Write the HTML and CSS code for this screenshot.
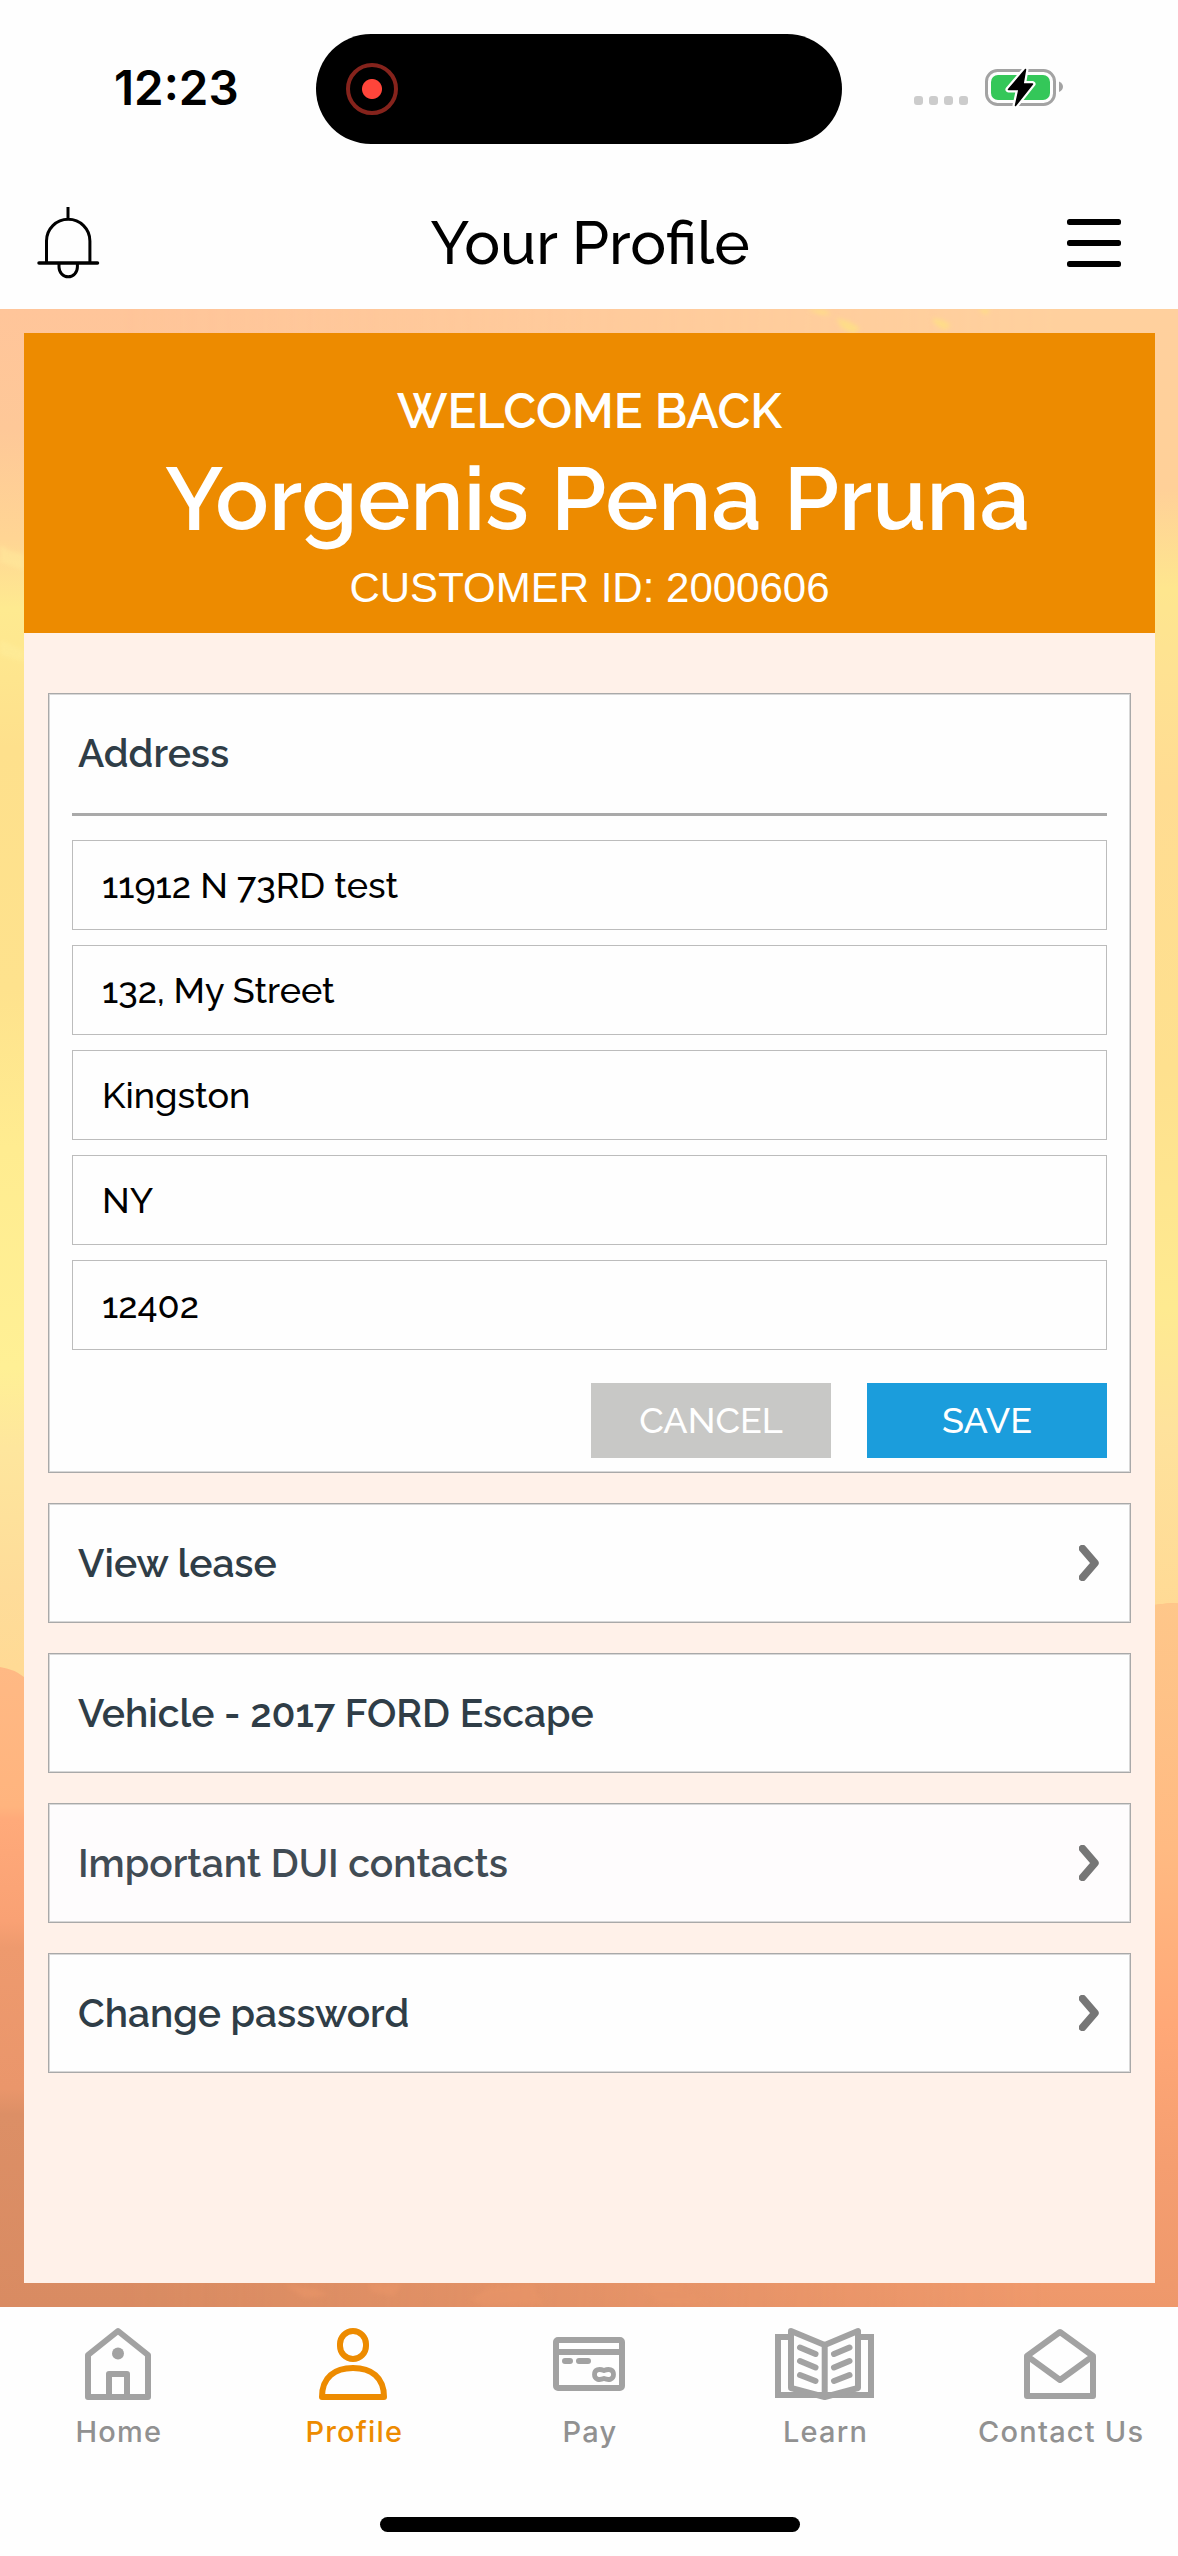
FILE: index.html
```html
<!DOCTYPE html>
<html lang="en">
<head>
<meta charset="utf-8">
<title>Your Profile</title>
<link rel="stylesheet" href="styles.css">
</head>
<body>
<div class="screen">
  <header class="status">
    <div class="clock">12:23</div>
    <div class="island"><span class="rec"></span></div>
    <div class="signal"><i></i><i></i><i></i><i></i></div>
    <svg class="battery" width="80" height="42" viewBox="984 66 80 42">
      <rect x="986.5" y="70.500" width="68" height="34" rx="11" fill="none" stroke="#a3a3a3" stroke-width="3"/>
      <path d="M1059 81.500q4 2 4 5.300t-4 5.300z" fill="#a3a3a3"/>
      <rect x="991" y="75" width="59" height="25" rx="7" fill="#34c759"/>
      <path d="M1025.500 69.500 1008.500 89.500H1019L1015.500 105.500 1032.500 84H1023Z" fill="#000" stroke="#fff" stroke-width="6" stroke-linejoin="round" paint-order="stroke"/>
      <path d="M1025.500 69.500 1008.500 89.500H1019L1015.500 105.500 1032.500 84H1023Z" fill="#000" stroke="#000" stroke-width="1.500" stroke-linejoin="round"/>
    </svg>
  </header>
  <nav class="topbar">
    <svg class="bell" width="66" height="74" viewBox="35 206 66 74" fill="none" stroke="#000" stroke-width="3">
      <path d="M68 207v12M46.500 263V241a21.700 21.700 0 0 1 43.400 0v22M59 264v3a9.200 9.800 0 0 0 18.400 0v-3"/>
      <path d="M39 263H97.500" stroke-linecap="round" stroke-width="3.500"/>
    </svg>
    <h1>Your Profile</h1>
    <div class="burger"><i></i><i></i><i></i></div>
  </nav>
  <main class="scene">
    <svg class="sky" width="1178" height="1998" viewBox="0 309 1178 1998" preserveAspectRatio="none">
      <defs>
        <linearGradient id="west" gradientUnits="userSpaceOnUse" x1="0" y1="309" x2="0" y2="2307">
          <stop offset="0" stop-color="#ffc59a"/><stop offset=".06" stop-color="#fec898"/><stop offset=".115" stop-color="#ffd594"/>
          <stop offset=".15" stop-color="#feea90"/><stop offset=".22" stop-color="#fee08c"/><stop offset=".34" stop-color="#fee28d"/>
          <stop offset=".42" stop-color="#ffec90"/><stop offset=".53" stop-color="#fff095"/><stop offset=".57" stop-color="#fee69d"/>
          <stop offset=".64" stop-color="#fedc99"/><stop offset=".68" stop-color="#ffda95"/>
        </linearGradient>
        <linearGradient id="east" gradientUnits="userSpaceOnUse" x1="0" y1="309" x2="0" y2="2307">
          <stop offset="0" stop-color="#ffd09e"/><stop offset=".09" stop-color="#ffd098"/><stop offset=".14" stop-color="#fee68e"/>
          <stop offset=".18" stop-color="#fee292"/><stop offset=".24" stop-color="#ffdc92"/><stop offset=".38" stop-color="#fee08e"/>
          <stop offset=".5" stop-color="#feea90"/><stop offset=".56" stop-color="#fee29c"/><stop offset=".65" stop-color="#ffda95"/>
        </linearGradient>
        <linearGradient id="hillWest" gradientUnits="userSpaceOnUse" x1="0" y1="1665" x2="0" y2="2307">
          <stop offset="0" stop-color="#ffb984"/><stop offset=".22" stop-color="#ffb47e"/><stop offset=".24" stop-color="#ffaa7a"/>
          <stop offset=".4" stop-color="#f9a174"/><stop offset=".44" stop-color="#ee9a6e"/><stop offset=".66" stop-color="#ea966b"/>
          <stop offset=".7" stop-color="#dc8f66"/><stop offset="1" stop-color="#d98b62"/>
        </linearGradient>
        <linearGradient id="hillEast" gradientUnits="userSpaceOnUse" x1="0" y1="1600" x2="0" y2="2307">
          <stop offset="0" stop-color="#fec78a"/><stop offset=".35" stop-color="#ffba82"/><stop offset=".6" stop-color="#ffa877"/>
          <stop offset=".8" stop-color="#f59e70"/><stop offset="1" stop-color="#ee986b"/>
        </linearGradient>
        <linearGradient id="fade" x1="0" x2="1" y1="0" y2="0">
          <stop offset=".1" stop-color="#000"/><stop offset=".9" stop-color="#fff"/>
        </linearGradient>
        <mask id="toEast" maskUnits="userSpaceOnUse" x="0" y="309" width="1178" height="1998">
          <rect x="0" y="309" width="1178" height="1998" fill="url(#fade)"/>
        </mask>
        <filter id="soft"><feGaussianBlur stdDeviation="2"/></filter>
      </defs>
      <rect y="309" width="1178" height="1998" fill="url(#west)"/>
      <rect y="309" width="1178" height="1998" fill="url(#east)" mask="url(#toEast)"/>
      <path d="M808 309l16 1 8 5-14-1zM836 318l14 4 10 6-6 6-12-6zM932 318l10 2 9 5-6 5-10-6zM978 309h12l-4 6z" fill="#fedd88" filter="url(#soft)"/>
      <path d="M0 1667q14 2 24 10L600 1700 1154 1605q14-2 24-2V2307H0z" fill="url(#hillWest)"/>
      <path d="M0 1667q14 2 24 10L600 1700 1154 1605q14-2 24-2V2307H0z" fill="url(#hillEast)" mask="url(#toEast)"/>
      <path d="M0 545l10 6 14 3v16l-24-8z M0 640l24 10v12L0 655z" fill="#fff0a0" opacity=".4" filter="url(#soft)"/>
      <path d="M285 2285l30 4 15 6-25 3zM368 2284h34l-8 12-22-4zM470 2300l18-12 44-4 12 20-60 2zM640 2287h40l30 16h-50z" fill="#e89468" opacity=".7" filter="url(#soft)"/>
    </svg>
    <section class="panel">
      <div class="welcome">
        <p class="hello">WELCOME BACK</p>
        <p class="name">Yorgenis Pena Pruna</p>
        <p class="cid">CUSTOMER ID: 2000606</p>
      </div>
      <div class="cards">
        <div class="card address">
          <h2>Address</h2>
          <div class="field">11912 N 73RD test</div>
          <div class="field">132, My Street</div>
          <div class="field">Kingston</div>
          <div class="field">NY</div>
          <div class="field">12402</div>
          <div class="actions">
            <button class="btn cancel">CANCEL</button>
            <button class="btn save">SAVE</button>
          </div>
        </div>
        <div class="card row"><span>View lease</span><svg class="chev" width="20" height="36" viewBox="0 0 20 36"><path d="M3.500 3.500 16 18 3.500 32.500"/></svg></div>
        <div class="card row"><span>Vehicle - 2017 FORD Escape</span></div>
        <div class="card row pressed"><span>Important DUI contacts</span><svg class="chev" width="20" height="36" viewBox="0 0 20 36"><path d="M3.500 3.500 16 18 3.500 32.500"/></svg></div>
        <div class="card row"><span>Change password</span><svg class="chev" width="20" height="36" viewBox="0 0 20 36"><path d="M3.500 3.500 16 18 3.500 32.500"/></svg></div>
      </div>
    </section>
  </main>
  <footer class="tabs">
    <a class="tab"><svg width="66" height="74" viewBox="85 2327 66 74"><path d="M88 2355 118 2331 148 2355V2397H88Z M109 2397V2374H127V2397"/><circle cx="118" cy="2353.500" r="6" fill="currentColor" stroke="none"/></svg><span>Home</span></a>
    <a class="tab on"><svg width="70" height="74" viewBox="318 2327 70 74"><rect x="340" y="2331" width="26" height="28" rx="13"/><path d="M322 2397c0-20 13-29 31-29s31 9 31 29z"/></svg><span>Profile</span></a>
    <a class="tab"><svg width="74" height="74" viewBox="551 2327 74 74"><rect x="555" y="2340" width="66" height="48" rx="2"/><path d="M555 2352H621"/><path d="M564 2361h5M578 2361h9" stroke-linecap="round"/><path d="M603 2370.500c-5-2-9.500-1-9.500 4s4.500 6 9.500 4c5 2 9.500 1 9.500-4s-4.500-6-9.500-4z" stroke-width="4.800"/></svg><span>Pay</span></a>
    <a class="tab"><svg width="100" height="74" viewBox="774 2327 100 74"><path d="M787 2337H777V2395H870V2337H860" stroke-linejoin="miter"/><path d="M790 2331 823.700 2345 857 2331V2388L823.700 2397 790 2388Z M823.700 2345V2397"/><path d="M799 2347.500 814.500 2354M799 2361 814.500 2367.500M799 2375 814.500 2381M848.500 2347.500 833 2354M848.500 2361 833 2367.500M848.500 2375 833 2381" stroke-linecap="round"/></svg><span>Learn</span></a>
    <a class="tab"><svg width="74" height="74" viewBox="1023 2327 74 74"><path d="M1027 2356 1060 2332 1093 2356V2396H1027Z M1027 2356 1060 2380 1093 2356"/></svg><span>Contact Us</span></a>
  </footer>
  <div class="homebar"></div>
</div>
</body>
</html>
```
FILE: styles.css
```css
* { box-sizing: border-box; }
body { margin: 0; background: #fff; }
h1, h2, p { margin: 0; font-weight: inherit; }
.screen {
  width: 1178px;
  height: 2556px;
  display: flex;
  flex-direction: column;
  background: #fefefe;
  font-family: Raleway, Lato, "Open Sans", sans-serif;
  font-variant-numeric: oldstyle-nums;
}
.status {
  height: 178px;
  display: flex;
  align-items: flex-start;
}
.clock {
  width: 316px;
  padding: 59px 0 0 114px;
  font: 600 47.500px/58px Inter, sans-serif;
}
.island {
  width: 526px;
  height: 110px;
  margin-top: 34px;
  padding: 29px 0 0 30px;
  border-radius: 55px;
  background: #000;
}
.rec {
  display: block;
  width: 52px;
  height: 52px;
  border: 4.500px solid #85231c;
  border-radius: 50%;
  background: radial-gradient(circle, #ff453a 9.500px, #000 10.500px);
}
.signal { display: flex; gap: 6px; margin: 96px 0 0 72px; }
.signal i { width: 9px; height: 9px; border-radius: 3px; background: #ccc; }
.battery { margin: 66px 0 0 16px; }
.topbar {
  height: 131px;
  padding: 0 57px 0 35px;
  display: flex;
  justify-content: space-between;
  align-items: flex-start;
}
.bell { margin-top: 28px; }
.topbar h1 { margin: 30px 0 0 12px; font-size: 60px; line-height: 70px; font-weight: 500; }
.burger { width: 54px; margin-top: 41px; display: grid; gap: 15px; }
.burger i { height: 6px; border-radius: 2.500px; background: #000; }
.scene {
  position: relative;
  height: 1998px;
  padding: 24px 23px 24px 24px;
}
.sky { position: absolute; left: 0; top: 0; }
.panel {
  position: relative;
  height: 1950px;
  background: #fff1e9;
}
.welcome {
  height: 300px;
  padding-top: 48px;
  background: #ed8b00;
  color: #fff;
  text-align: center;
}
.hello { font-size: 48px; line-height: 60px; font-weight: 600; }
.name { padding: 3px 0 0 16px; font-size: 89px; line-height: 110px; font-weight: 600; }
.cid { margin-top: 9px; font: 42px/50px "Liberation Sans", Arial, sans-serif; }
.cards {
  padding: 60px 24px 0;
  display: grid;
  gap: 30px;
}
.card {
  border: 1px solid #a9a9a9;
  box-shadow: inset 0 0 0 1px #d8d8d8;
  background: #fefefe;
  color: #2f3d47;
  font-size: 39px;
  font-weight: 600;
}
.address {
  height: 780px;
  padding: 0 23px;
}
.address h2 {
  height: 122px;
  margin-bottom: 24px;
  padding-left: 6px;
  border-bottom: 3px solid #a9a9a9;
  font-size: 39px;
  line-height: 119px;
}
.field {
  height: 90px;
  margin-bottom: 15px;
  padding-left: 29px;
  border: 1px solid #bcbcbc;
  color: #000;
  font-size: 36px;
  font-weight: 500;
  line-height: 88px;
}
.actions { display: flex; justify-content: flex-end; gap: 36px; padding-top: 18px; }
.btn {
  width: 240px;
  height: 75px;
  padding: 0;
  border: 0;
  color: #fff;
  font: 500 36px/75px Raleway, Lato, sans-serif;
}
.cancel { background: #c8c8c6; }
.save { background: #1b9ddc; }
.row {
  height: 120px;
  padding: 0 31px 0 29px;
  display: flex;
  justify-content: space-between;
  align-items: center;
}
.pressed { background: #fefcfd; color: #414b54; }
.chev { fill: none; stroke: #767676; stroke-width: 7.500px; stroke-linecap: round; stroke-linejoin: round; }
.tabs { height: 210px; display: flex; }
.tab {
  flex: 1 1 0;
  display: flex;
  flex-direction: column;
  align-items: center;
  padding-top: 20px;
  color: #919191;
  font: 500 29px/36px Inter, sans-serif;
  letter-spacing: 1.200px;
}
.tab svg { margin-bottom: 13px; color: #a2a2a2; fill: none; stroke: currentColor; stroke-width: 6px; stroke-linejoin: round; }
.tab span { padding-left: 2px; }
.tab.on, .tab.on svg { color: #ed8b00; }
.homebar { width: 420px; height: 15px; margin-left: 380px; border-radius: 8px; background: #000; }
```
